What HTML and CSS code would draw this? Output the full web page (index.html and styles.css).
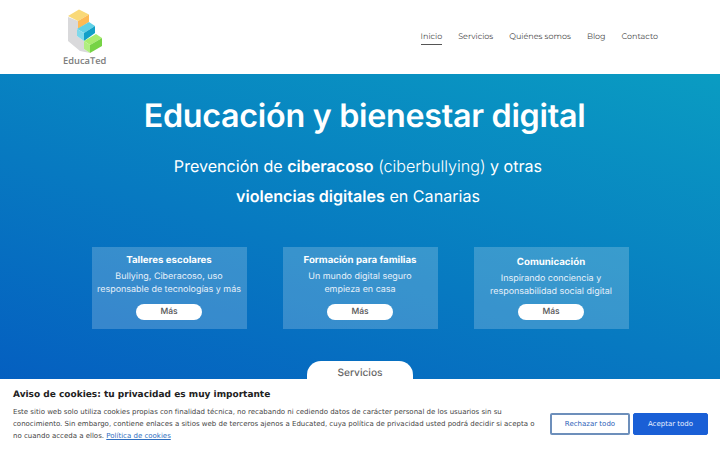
FILE: index.html
```html
<!DOCTYPE html>
<html lang="es">
<head>
<meta charset="utf-8">
<title>EducaTed</title>
<link rel="stylesheet" href="styles.css">
</head>
<body>
<header class="site-header">
  <a class="logo" href="#">
    <svg class="logo-mark" width="38" height="46" viewBox="66 8 38 46">
      <polygon points="68,17 78,21 78,29 77,29 77,36 84,41 84,49 90,53 80,51 68,41" fill="#d9d9db"/>
      <polygon points="68,16 79,9.5 89,14.5 78,21" fill="#f9d978"/>
      <polygon points="78,21 89,14.5 89,22 78,29" fill="#fdba55"/>
      <polygon points="77,29 89,22 95,26 84,33" fill="#5fd0e6"/>
      <polygon points="84,33 95,26 95,33 84,41" fill="#11a0c8"/>
      <polygon points="77,29 84,33 84,41 77,36" fill="#7fd8ea"/>
      <polygon points="84,41 96,34 102,38 90,45" fill="#a8ec6e"/>
      <polygon points="90,45 102,38 102,46 90,53" fill="#76d345"/>
      <polygon points="84,41 90,45 90,53 84,49" fill="#b0ee80"/>
    </svg>
    <span class="logo-text">EducaTed</span>
  </a>
  <nav class="nav">
    <a class="nav-link is-active" href="#">Inicio</a>
    <a class="nav-link" href="#">Servicios</a>
    <a class="nav-link" href="#">Quiénes somos</a>
    <a class="nav-link" href="#">Blog</a>
    <a class="nav-link" href="#">Contacto</a>
  </nav>
</header>
<main class="hero">
  <h1 class="hero-title">Educación y bienestar digital</h1>
  <p class="hero-sub">Prevención de <strong>ciberacoso</strong> <span class="light">(ciberbullying)</span> y otras<br><strong>violencias digitales</strong> en Canarias</p>
  <section class="cards">
    <article class="card">
      <h2 class="card-title">Talleres escolares</h2>
      <p class="card-text">Bullying, Ciberacoso, uso<br>responsable de tecnologías y más</p>
      <a class="pill" href="#">Más</a>
    </article>
    <article class="card">
      <h2 class="card-title">Formación para familias</h2>
      <p class="card-text">Un mundo digital seguro<br>empieza en casa</p>
      <a class="pill" href="#">Más</a>
    </article>
    <article class="card card-low">
      <h2 class="card-title">Comunicación</h2>
      <p class="card-text">Inspirando conciencia y<br>responsabilidad social digital</p>
      <a class="pill" href="#">Más</a>
    </article>
  </section>
  <a class="cta" href="#">Servicios</a>
</main>
<aside class="cookie">
  <div class="cookie-copy">
    <h3 class="cookie-title">Aviso de cookies: tu privacidad es muy importante</h3>
    <p class="cookie-text">Este sitio web solo utiliza cookies propias con finalidad técnica, no recabando ni cediendo datos de carácter personal de los usuarios sin su conocimiento. Sin embargo, contiene enlaces a sitios web de terceros ajenos a Educated, cuya política de privacidad usted podrá decidir si acepta o no cuando acceda a ellos. <a class="cookie-link" href="#">Política de cookies</a></p>
  </div>
  <div class="cookie-actions">
    <button class="btn btn-outline">Rechazar todo</button>
    <button class="btn btn-solid">Aceptar todo</button>
  </div>
</aside>
</body>
</html>
```
FILE: styles.css
```css
* { box-sizing: border-box; }
html, body { margin: 0; height: 450px; overflow: hidden; }
body { position: relative; width: 720px; background: #fff; font-family: "Inter", sans-serif; text-rendering: geometricPrecision; }
a { text-decoration: none; }

.site-header { height: 74px; display: flex; justify-content: space-between; align-items: flex-start; padding: 0 62px 0 63px; background: #fff; }
.logo { display: flex; flex-direction: column; align-items: flex-start; padding-top: 8px; }
.logo-mark { display: block; margin-left: 3px; }
.logo-text { margin-top: 1px; font: 600 9.3px/12px "Open Sans", sans-serif; color: #7d7d7d; }
.nav { display: flex; gap: 16px; padding-top: 32px; }
.nav-link { font: 400 8px/11px "Montserrat", "Inter", sans-serif; color: #4a4a4a; padding-bottom: 1px; border-bottom: 1px solid transparent; }
.nav-link.is-active { border-bottom-color: #555; }

.hero { height: 376px; padding-top: 22px; display: flex; flex-direction: column; align-items: center; background: linear-gradient(197deg, #0a9cc2, #0457c0); color: #fff; }
.hero-title { margin: 0 0 0 9px; font: 600 32.3px/40px "Inter", sans-serif; letter-spacing: -.3px; }
.hero-sub { margin: 15px 4px 0 0; font: 400 16.1px/30px "Inter", sans-serif; text-align: center; }
.hero-sub strong { font-weight: 600; }
.light { font-weight: 300; }

.cards { display: flex; gap: 36px; margin-top: 36px; }
.card { width: 155px; height: 82px; padding: 7px 4px 0; display: flex; flex-direction: column; align-items: center; text-align: center; background: rgba(255,255,255,.2); }
.card-low { padding-top: 9px; }
.card-title { margin: 0; font: 700 9.7px/14px "Inter", sans-serif; }
.card-text { margin: 3px 0 0; font: 400 8.95px/12.5px "Inter", sans-serif; color: #e8f1fa; flex: 1; white-space: nowrap; }
.pill { width: 66px; height: 16px; margin-bottom: 9px; border-radius: 8px; background: #fff; color: #555; font: 500 8.5px/16px "Inter", sans-serif; text-align: center; }

.cta { margin-top: 32px; width: 106px; height: 40px; border-radius: 14px; background: #fff; color: #666; font: 500 10.2px/24px "Inter", sans-serif; text-align: center; }

.cookie { position: absolute; left: 0; right: 0; bottom: 0; height: 71px; padding: 10px 12px 0 13px; display: flex; justify-content: space-between; align-items: flex-start; background: #fff; font-family: "DejaVu Sans", sans-serif; }
.cookie-copy { width: 526px; }
.cookie-title { margin: 0 0 4px; font: 700 9px/13px "DejaVu Sans", sans-serif; color: #222; }
.cookie-text { margin: 0; font: 400 7px/12px "DejaVu Sans", sans-serif; color: #444; }
.cookie-link { color: #2f6fc0; text-decoration: underline; }
.cookie-actions { display: flex; gap: 3px; margin-top: 24px; }
.btn { height: 22px; font: 400 7px/1 "DejaVu Sans", sans-serif; border-radius: 2px; }
.btn-outline { width: 80px; background: #fff; border: 2px solid #6d8fbb; color: #2f62b8; }
.btn-solid { width: 75px; background: #1a5fd6; border: 1px solid #1a5fd6; color: #e8f0ff; }
```
